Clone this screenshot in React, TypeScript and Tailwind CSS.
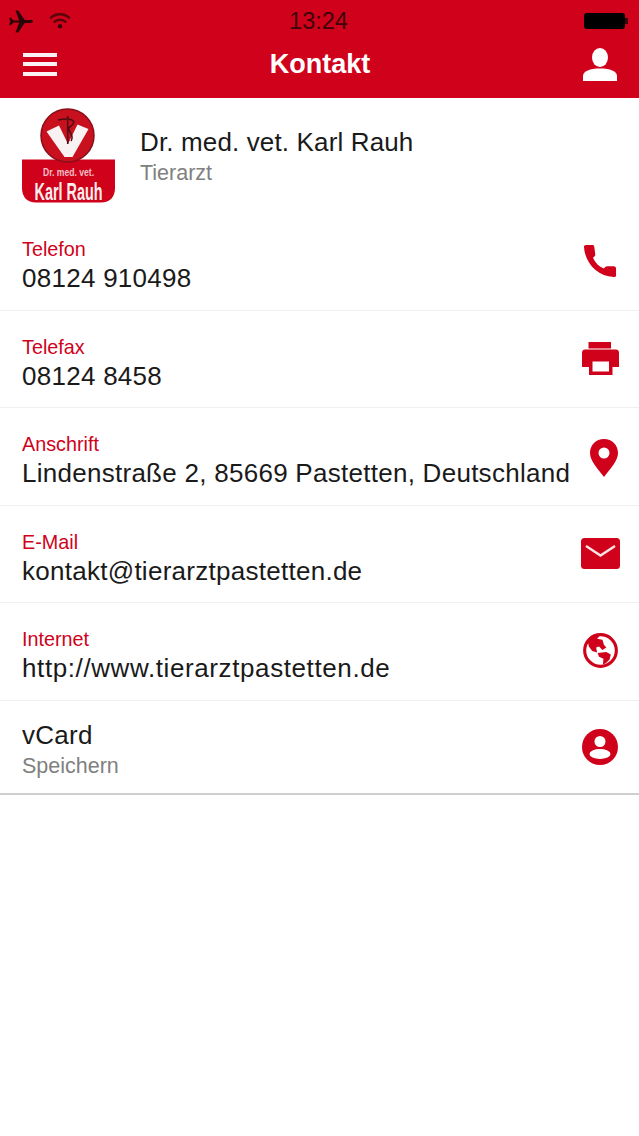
import React from 'react';

const font = { fontFamily: '"Liberation Sans", Arial, sans-serif' };

const PhoneIcon = () => (
  <svg viewBox="0 0 36 36" className="w-[34px] h-[34px]" fill="#d0021b">
    <path d="M3 1 L10 1 C11.500 1 12 2 12 3.500 L13 11 C13 12.500 12 13.500 10.500 14.500 C13 20 17 24 22 26 C23 24.500 24 23.500 25.500 23.500 L33 23.500 C34.500 24 35 25 35 26.500 L35 33 C35 34.500 34 35 32.500 35 C15 34 2 20 1 3 C1 2 2 1 3 1 Z" />
  </svg>
);

const PrintIcon = () => (
  <svg viewBox="0 0 37 33" className="w-[37px] h-[33px]" fill="#d0021b">
    <path d="M6.500 0 H29 V6.500 H6.500 Z" />
    <path fillRule="evenodd" d="M3 7.500 H34 C36 7.500 37 9 37 11 V25 H30.500 V33 H7 V25 H0 V11 C0 9 1 7.500 3 7.500 Z M10.500 19.500 V29.500 H27 V19.500 Z" />
  </svg>
);

const PinIcon = () => (
  <svg viewBox="0 0 28 38" className="w-[28px] h-[38px] mt-[4px] ml-[8px]" fill="#d0021b">
    <path fillRule="evenodd" d="M14 0 C22 0 28 6 28 14 C28 22 20 30 14 38 C8 30 0 22 0 14 C0 6 6 0 14 0 Z M14 8.500 A5.500 5.500 0 1 0 14 19.500 A5.500 5.500 0 1 0 14 8.500 Z" />
  </svg>
);

const MailIcon = () => (
  <svg viewBox="0 0 39 31" className="w-[39px] h-[31px] mt-[1px]">
    <rect x="0" y="0" width="39" height="31" rx="3.500" fill="#d0021b" />
    <path d="M5 8 L19.500 17.500 L34 8" stroke="#fbe3e6" strokeWidth="2.500" fill="none" />
  </svg>
);

const GlobeIcon = () => (
  <svg viewBox="0 0 36 36" className="w-[35px] h-[35px]" fill="#d0021b">
    <circle cx="18" cy="18" r="16.300" fill="none" stroke="#d0021b" strokeWidth="3.200" />
    <path d="M5 9 L11 3 L17 3 L14.500 6 L20 7 L21.500 12 L24 15 L20 17.500 L16.500 14 L13.500 15 L14.500 20 L9.500 18.500 L6 14 Z" />
    <path d="M15 20.500 L24 19.500 L28.500 22 L27.500 27 L23.500 31 L20.500 32.500 L21 26.500 L16.500 24.500 Z" />
  </svg>
);

const AccountIcon = () => (
  <svg viewBox="0 0 36 36" className="w-[36px] h-[36px]">
    <circle cx="18" cy="18" r="18" fill="#d0021b" />
    <circle cx="18" cy="12.500" r="5.500" fill="#fff" />
    <ellipse cx="18" cy="25" rx="10.500" ry="5" fill="#fff" />
  </svg>
);

const Logo = () => (
  <svg viewBox="0 0 96 96" className="w-[96px] h-[96px]">
    <path d="M1 51.500 H94 V80 C94 89 89 94.500 80 94.500 H15 C6 94.500 1 89 1 80 Z" fill="#d0021b" />
    <circle cx="46.500" cy="27.500" r="26.500" fill="#c8101f" stroke="#8a0f18" strokeWidth="1.500" />
    <path d="M25.500 23.500 L38 17.500 L47 36 L56.500 16.500 L67.500 21 L51.500 49 H43.500 Z" fill="#f8f2f2" />
    <path d="M46.700 8 V36 M37 12 C50 9 57 13 50 18 C43 22 55 26 50 33" stroke="#4a0d12" strokeWidth="1.500" fill="none" />
    <text transform="translate(47.500 67.500) scale(0.82 1)" textAnchor="middle" fontSize="10.500" fontWeight="700" fill="#f3bfc5">Dr. med. vet.</text>
    <text transform="translate(47.500 92) scale(0.6 1)" textAnchor="middle" fontSize="24" fontWeight="700" fill="#fbeeee">Karl Rauh</text>
  </svg>
);

interface ContactRowProps {
  label: string;
  value: string;
  icon: React.ReactNode;
  valueClass?: string;
}

const ContactRow: React.FC<ContactRowProps> = ({ label, value, icon, valueClass = 'tracking-[0.27px]' }) => (
  <div className="h-[97.5px] flex items-center justify-between border-b border-[#f0f0f0] pl-[22px]">
    <div className="flex-1 min-w-0 mt-[10px]">
      <p className="text-[19.8px] leading-[25px] text-[#d0021b]">{label}</p>
      <p className={`text-[26px] leading-[33px] text-[#1a1a1a] whitespace-nowrap ${valueClass}`}>{value}</p>
    </div>
    <div className="w-[78px] shrink-0 flex justify-center -mt-[1px]">{icon}</div>
  </div>
);

export default function App() {
  return (
    <div className="w-[639px] h-[1136px] bg-white flex flex-col" style={font}>
      <header className="h-[98px] bg-[#d0021b] shrink-0">
        <div className="h-[44px] pl-[9px] pr-[11px] grid grid-cols-[1fr_auto_1fr] items-center">
          <div className="flex items-center gap-[16px] -mt-[2px]">
            <svg viewBox="0 0 26 24" className="w-[24px] h-[23px]" fill="#2a0508">
              <path d="M0 8 L2 8 L5 11 H11 L7 0 H10 L17 10.500 H22 C25 10.500 26 11 26 12 C26 13 25 13.500 22 13.500 H17 L10 24 H7 L11 13 H5 L2 16 H0 L1.500 12 Z" />
            </svg>
            <svg viewBox="0 0 24 18" className="w-[22px] h-[16px]" fill="none" stroke="#5a0509" strokeWidth="2.800">
              <path d="M1 6 C7 0 17 0 23 6" />
              <path d="M5 10.500 C9 6.500 15 6.500 19 10.500" />
              <circle cx="12" cy="15" r="2.500" fill="#3d0509" stroke="none" />
            </svg>
          </div>
          <span className="text-[23.500px] text-[#3d0509]">13:24</span>
          <div className="flex items-center justify-end -mt-[2px]">
            <div className="w-[41px] h-[16px] bg-black rounded-[3px]" />
            <div className="w-[3px] h-[6px] bg-[#3d0509]" />
          </div>
        </div>
        <div className="h-[58px] pl-[23px] pr-[22px] flex items-center justify-between -mt-[9px]">
          <div className="w-[34px] flex flex-col gap-[5.5px]">
            <div className="h-[4px] bg-[#fdf2f3]" />
            <div className="h-[4px] bg-[#fdf2f3]" />
            <div className="h-[4px] bg-[#fdf2f3]" />
          </div>
          <h1 className="text-[27px] font-bold text-white">Kontakt</h1>
          <svg viewBox="0 0 34 33" className="w-[34px] h-[33px]" fill="#fff">
            <ellipse cx="17" cy="9.500" rx="8" ry="9.500" />
            <path d="M0 33 V28 C0 23 7 20.500 17 20.500 C27 20.500 34 23 34 28 V33 Z" />
          </svg>
        </div>
      </header>

      <section className="h-[115px] flex items-center pl-[21px] shrink-0">
        <Logo />
        <div className="ml-[23px] mt-[2px]">
          <p className="text-[26px] leading-[32px] text-[#1a1a1a] tracking-[0.14px]">Dr. med. vet. Karl Rauh</p>
          <p className="text-[21.5px] leading-[30px] text-[#808080]">Tierarzt</p>
        </div>
      </section>

      <ContactRow label="Telefon" value="08124 910498" icon={<PhoneIcon />} />
      <ContactRow label="Telefax" value="08124 8458" icon={<PrintIcon />} />
      <ContactRow label="Anschrift" value="Lindenstraße 2, 85669 Pastetten, Deutschland" icon={<PinIcon />} />
      <ContactRow label="E-Mail" value="kontakt@tierarztpastetten.de" icon={<MailIcon />} />
      <ContactRow label="Internet" value="http://www.tierarztpastetten.de" icon={<GlobeIcon />} valueClass="tracking-[0.6px]" />
      <div className="h-[94px] flex items-center justify-between border-b-2 border-[#cfcfcf] pl-[22px]">
        <div className="mt-[7px]">
          <p className="text-[26px] leading-[32px] text-[#1a1a1a] tracking-[0.27px]">vCard</p>
          <p className="text-[21.5px] leading-[30px] text-[#808080]">Speichern</p>
        </div>
        <div className="w-[78px] shrink-0 flex justify-center">
          <AccountIcon />
        </div>
      </div>
    </div>
  );
}
